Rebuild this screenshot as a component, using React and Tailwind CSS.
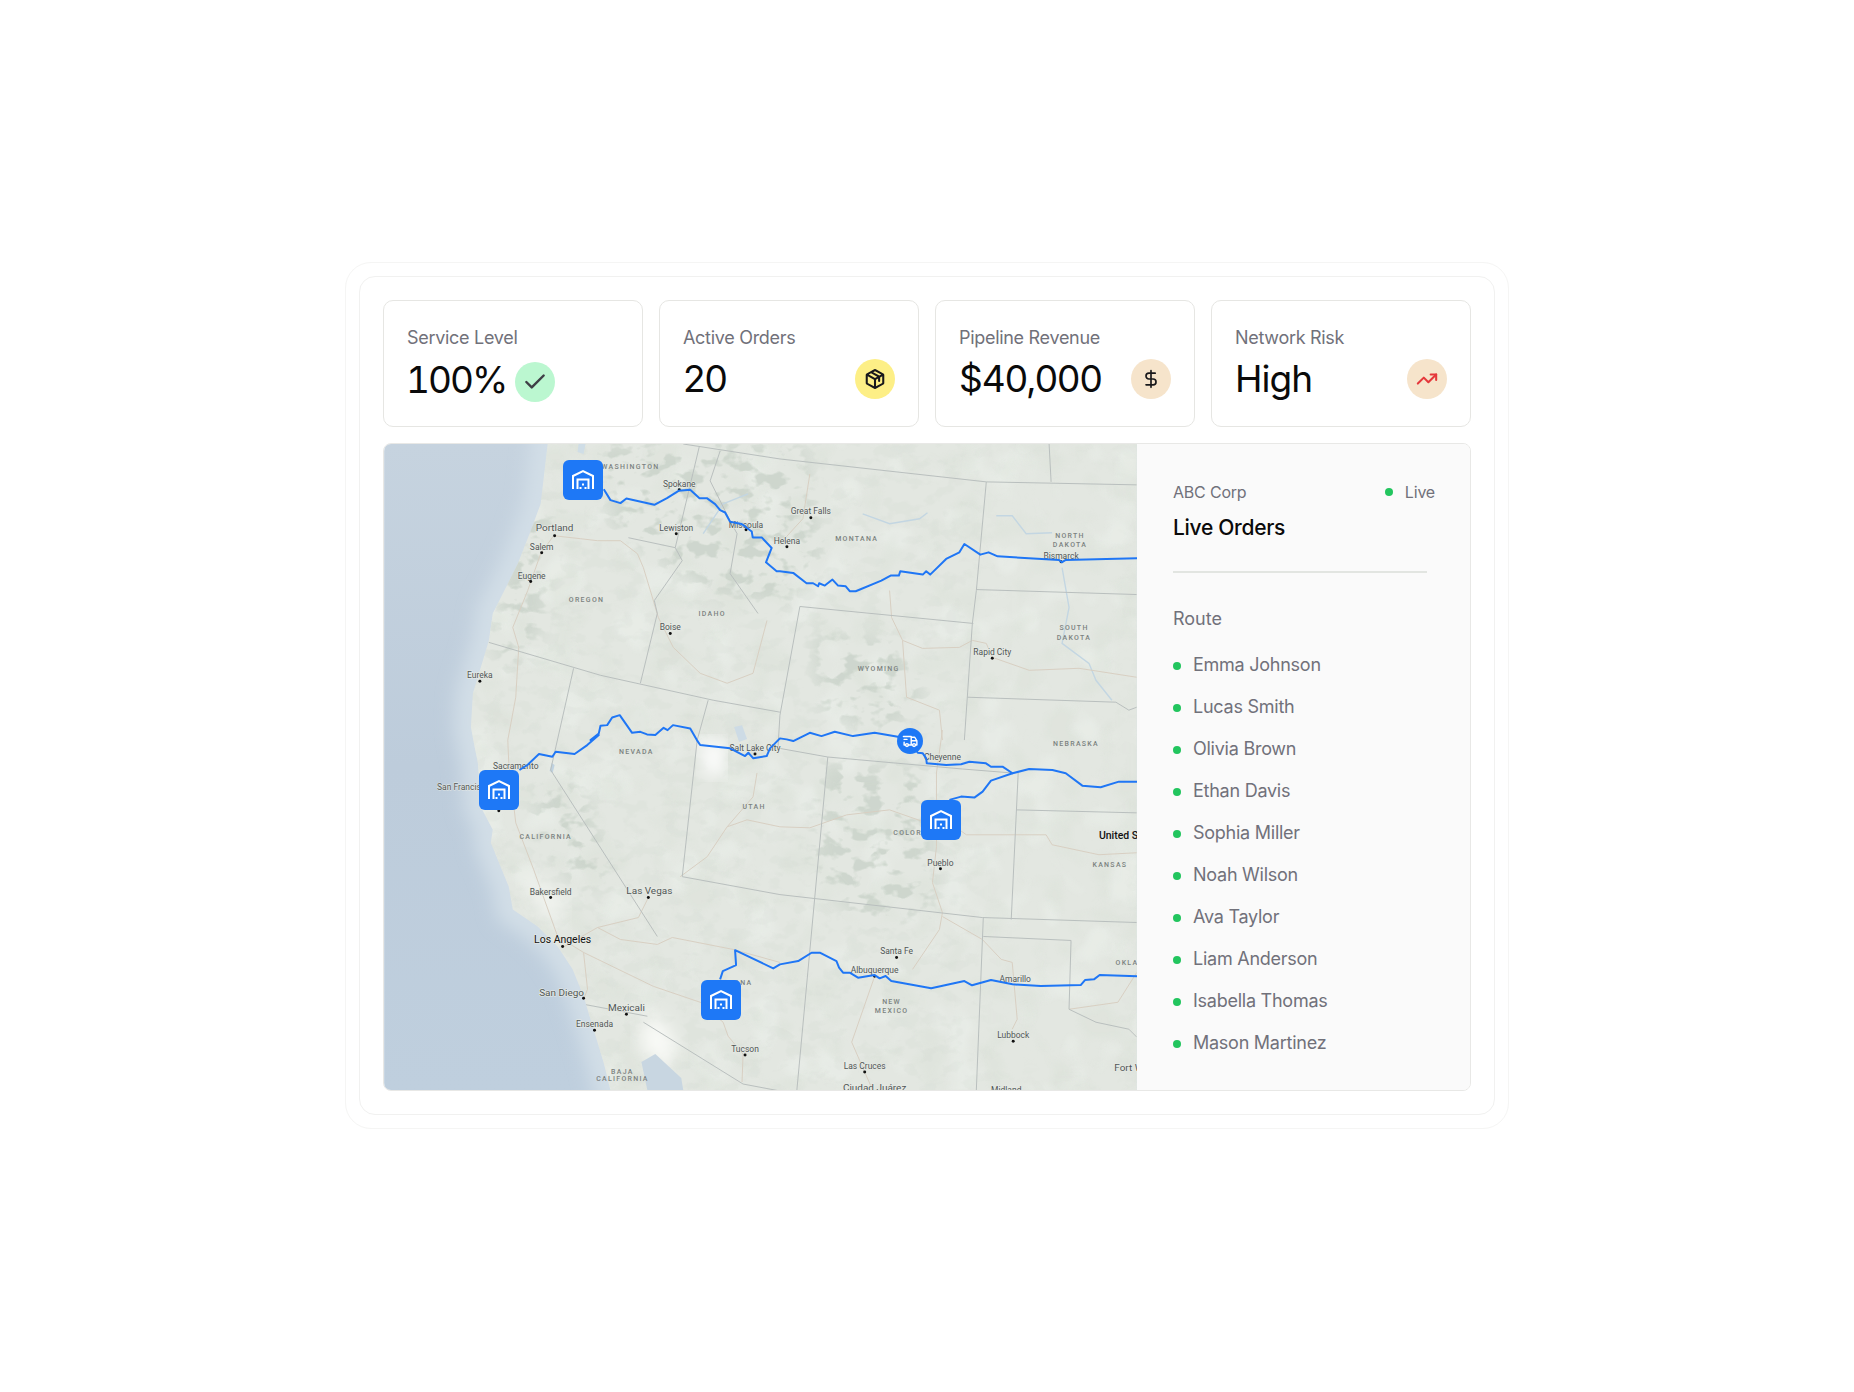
import { Check, DollarSign, TrendingUp } from "lucide-react";
import { PiPackageBold } from "react-icons/pi";
import { TbTruckDelivery } from "react-icons/tb";

const drivers = [
  "Emma Johnson",
  "Lucas Smith",
  "Olivia Brown",
  "Ethan Davis",
  "Sophia Miller",
  "Noah Wilson",
  "Ava Taylor",
  "Liam Anderson",
  "Isabella Thomas",
  "Mason Martinez",
];

// crops of the map were read at 3x, these turn crop coordinates into map coordinates
const crop = (ox, oy) => (pts) => pts.map(([x, y]) => [ox + x / 3, oy + y / 3]);
const nw = crop(-3, -3);
const ne = crop(397, -3);
const sw = crop(-3, 287);
const se = crop(397, 287);

const line = (pts) => "M" + pts.map(([x, y]) => `${x.toFixed(1)} ${y.toFixed(1)}`).join("L");

const land =
  line([
    [164, 0],
    [160, 34],
    [157, 60],
    [147, 87],
    [134, 120],
    [117, 154],
    [109, 170],
    [105, 197],
    [97, 224],
    [89, 250],
    [87, 284],
    [90, 300],
    [94, 320],
    [97, 364],
    [109, 387],
    [107, 400],
    [125, 444],
    [129, 467],
    [154, 484],
    [174, 504],
    [189, 527],
    [200, 554],
    [210, 587],
    [220, 620],
    [227, 648],
    [755, 648],
    [755, 0],
  ]) + "Z";

const routes = [
  [
    ...nw([[670, 145], [690, 178], [720, 187], [738, 173], [822, 192], [860, 172], [895, 150], [930, 147], [958, 172], [980, 172], [1005, 190], [1020, 208], [1035, 215], [1050, 243], [1085, 250], [1115, 272], [1118, 290], [1145, 290], [1175, 322], [1158, 365], [1190, 392]]),
    ...ne([[0, 392], [40, 397], [80, 428], [100, 428], [115, 437], [118, 428], [135, 435], [158, 417], [175, 435], [198, 437], [210, 452], [228, 452], [305, 420], [333, 405], [358, 405], [362, 392], [430, 402], [440, 392], [452, 402], [500, 355], [540, 335], [555, 310], [603, 342], [628, 335], [655, 347], [840, 358], [848, 365], [860, 358], [1078, 353]]),
  ],
  [
    ...sw([[416, 120], [440, 105], [475, 72], [515, 80], [525, 65], [582, 72], [620, 45], [655, 15]]),
    ...nw([[630, 900], [655, 880], [660, 857], [680, 855], [695, 832], [718, 825], [755, 878], [780, 875], [800, 883], [825, 885], [850, 863], [862, 870], [878, 855], [930, 865], [950, 900]]),
    ...sw([[960, 45], [1050, 55], [1095, 78], [1105, 68], [1120, 85], [1160, 78], [1170, 55], [1200, 25]]),
    ...se([[20, 28], [40, 33], [90, 8], [125, 18], [165, 5], [220, 18], [285, 8], [355, 20], [390, 33], [415, 68], [430, 70], [440, 85], [442, 100], [500, 105], [545, 103], [570, 95], [620, 100], [635, 110], [670, 110], [700, 130], [750, 117], [820, 120], [860, 130], [910, 167], [965, 172], [1020, 155], [1078, 155]]),
  ],
  se([[510, 210], [545, 200], [585, 203], [610, 185], [635, 152], [700, 130]]),
  [
    ...sw([[1020, 750], [1028, 725], [1068, 707], [1065, 662], [1180, 717], [1200, 705]]),
    ...se([[55, 695], [95, 670], [120, 670], [170, 695], [178, 715], [190, 730], [210, 730], [235, 745], [285, 737], [300, 747], [318, 740], [335, 755], [455, 777], [555, 755], [578, 768], [635, 752], [700, 765], [785, 770], [905, 767], [918, 752], [945, 750], [962, 737], [1078, 741]]),
  ],
];

const borders = [
  [[300, 0], [397, 15], [604, 38], [755, 41]],
  [[604, 38], [594, 147], [590, 180], [582, 297]],
  [[594, 146], [755, 151]],
  [[417, 163], [591, 180]],
  [[417, 163], [397, 272], [395, 305], [445, 314], [580, 326], [630, 330]],
  [[445, 314], [414, 648]],
  [[316, 3], [292, 104]],
  [[245, 94], [292, 104], [299, 117], [271, 157], [274, 170], [257, 240]],
  [[105, 199], [217, 232], [330, 257], [397, 269]],
  [[190, 225], [167, 327], [274, 494]],
  [[325, 257], [314, 297], [299, 434]],
  [[299, 434], [397, 452], [600, 475], [755, 480]],
  [[636, 330], [629, 477]],
  [[634, 367], [755, 370]],
  [[601, 475], [594, 648]],
  [[601, 494], [689, 498], [687, 567], [714, 580], [747, 587], [755, 595]],
  [[585, 254], [734, 259], [747, 267], [755, 264]],
  [[260, 580], [360, 642], [397, 649]],
  [[200, 562], [264, 574]],
  [[667, 0], [669, 38]],
  [[337, 7], [327, 37], [347, 77], [354, 90], [347, 130], [375, 170]],
];

const roads = [
  [[170, 92], [197, 95], [214, 97], [237, 97], [254, 110], [260, 124], [270, 157], [275, 174], [290, 204], [317, 230], [344, 240], [370, 230], [384, 177]],
  [[170, 92], [157, 110], [144, 147], [129, 184], [135, 204], [132, 254], [124, 297], [125, 320], [132, 380], [150, 427], [174, 494], [200, 510], [204, 547], [200, 557]],
  [[179, 505], [214, 485], [255, 475], [265, 455]],
  [[200, 510], [270, 544], [317, 560], [340, 580], [345, 594], [360, 612], [359, 640]],
  [[214, 485], [237, 497], [274, 502], [289, 495], [350, 507], [397, 520]],
  [[374, 330], [370, 354], [344, 384], [324, 414], [297, 434]],
  [[344, 384], [364, 377], [397, 384], [427, 385], [464, 372], [507, 367], [544, 380]],
  [[560, 287], [554, 330], [554, 404], [550, 440], [560, 470], [557, 487], [530, 527]],
  [[560, 474], [600, 497], [619, 517], [630, 520], [635, 577], [630, 587]],
  [[492, 534], [469, 600], [482, 630], [490, 648]],
  [[577, 387], [584, 392], [664, 392], [670, 402], [717, 412], [755, 410]],
  [[507, 147], [509, 174], [520, 197], [524, 254], [557, 267], [560, 297]],
  [[520, 197], [540, 205], [577, 204], [590, 197], [604, 200], [610, 214], [647, 227], [697, 225], [755, 234]],
  [[397, 100], [420, 75], [427, 30]],
  [[687, 567], [736, 560], [755, 530]],
];

const rivers = [
  [[614, 72], [630, 72], [644, 90], [670, 89]],
  [[680, 124], [687, 164], [680, 200], [707, 220], [714, 237], [730, 257]],
  [[480, 70], [507, 80], [537, 75], [545, 69]],
  [[320, 90], [340, 60], [365, 50]],
];

const cities = [
  ["Spokane", 296, 43, 296, 46],
  ["Lewiston", 293, 87, 293, 90],
  ["Portland", 171, 87, 171, 92, 10],
  ["Salem", 158, 106, 158, 109],
  ["Eugene", 148, 135, 147, 138],
  ["Boise", 287, 187, 287, 190],
  ["Eureka", 96, 235, 96, 238],
  ["Missoula", 363, 84, 363, 86],
  ["Great Falls", 428, 70, 428, 74],
  ["Helena", 404, 100, 404, 103],
  ["Bismarck", 679, 115, 679, 118],
  ["Rapid City", 610, 212, 610, 215],
  ["Sacramento", 132, 326, null, null],
  ["Bakersfield", 167, 452, 167, 455],
  ["Las Vegas", 266, 451, 265, 455, 10],
  ["Los Angeles", 179, 501, 179, 504, 10.5, "#111"],
  ["San Diego", 178, 554, 200, 556, 10],
  ["Mexicali", 243, 569, 243, 572, 10],
  ["Ensenada", 211, 585, 211, 588],
  ["Tucson", 362, 610, 362, 613],
  ["Salt Lake City", 372, 308, 372, 311],
  ["Cheyenne", 560, 317, null, null],
  ["Pueblo", 558, 423, 558, 426],
  ["Santa Fe", 514, 512, 514, 515],
  ["Albuquerque", 492, 531, 492, 534],
  ["Amarillo", 633, 540, null, null],
  ["Lubbock", 631, 596, 631, 599],
  ["Las Cruces", 482, 627, 482, 630],
  ["Ciudad Juárez", 492, 649, null, null, 10],
  ["Fort Worth", 756, 629, null, null, 10],
  ["Midland", 624, 651, null, null],
];

const states = [
  ["WASHINGTON", 247, 25],
  ["OREGON", 203, 158],
  ["IDAHO", 329, 173],
  ["MONTANA", 474, 97],
  ["NORTH", 688, 94],
  ["DAKOTA", 688, 103],
  ["SOUTH", 692, 187],
  ["DAKOTA", 692, 197],
  ["WYOMING", 496, 228],
  ["NEVADA", 253, 311],
  ["UTAH", 371, 366],
  ["CALIFORNIA", 162, 396],
  ["ARIZONA", 350, 543],
  ["BAJA", 239, 632],
  ["CALIFORNIA", 239, 639],
  ["NEBRASKA", 694, 303],
  ["COLORADO", 534, 392],
  ["KANSAS", 728, 424],
  ["NEW", 509, 562],
  ["MEXICO", 509, 571],
  ["OKLAHOMA", 758, 523],
];

function WarehouseIcon() {
  return (
    <svg viewBox="0 0 22 20" className="w-[22px] h-5" fill="none" stroke="white" strokeWidth="2">
      <path d="M1 19V6L11 1.2 21 6V19" />
      <path d="M5.5 19V9.5H16.5V19" />
      <rect x="10" y="13.5" width="2" height="2" fill="white" stroke="none" />
      <rect x="7.5" y="17" width="2" height="2" fill="white" stroke="none" />
      <rect x="12.5" y="17" width="2" height="2" fill="white" stroke="none" />
    </svg>
  );
}

function MapDrawing() {
  return (
    <svg viewBox="0 0 755 648" className="block w-full h-full" style={{ fontFamily: "Roboto, sans-serif" }}>
      <defs>
        <linearGradient id="sea" x1="0" y1="0" x2="0" y2="1">
          <stop offset="0" stopColor="#c6d3df" />
          <stop offset="0.5" stopColor="#bdccdb" />
          <stop offset="1" stopColor="#bfcfde" />
        </linearGradient>
        <clipPath id="landClip">
          <path d={land} />
        </clipPath>
        <filter id="soft" x="-20%" y="-20%" width="140%" height="140%">
          <feGaussianBlur stdDeviation="9" />
        </filter>
        <filter id="softer" x="-20%" y="-20%" width="140%" height="140%">
          <feGaussianBlur stdDeviation="22" />
        </filter>
        <filter id="ridges" x="0" y="0" width="100%" height="100%" colorInterpolationFilters="sRGB">
          <feTurbulence type="fractalNoise" baseFrequency="0.05 0.07" numOctaves="3" seed="11" />
          <feColorMatrix values="0 0 0 0 0.78  0 0 0 0 0.82  0 0 0 0 0.78  8 0 0 0 -4.2" />
          <feGaussianBlur stdDeviation="0.7" />
        </filter>
        <filter id="plains" x="0" y="0" width="100%" height="100%" colorInterpolationFilters="sRGB">
          <feTurbulence type="fractalNoise" baseFrequency="0.025" numOctaves="2" seed="4" />
          <feColorMatrix values="0 0 0 0 0.93  0 0 0 0 0.95  0 0 0 0 0.93  5 0 0 0 -2.6" />
          <feGaussianBlur stdDeviation="1" />
        </filter>
        <filter id="plainsDark" x="0" y="0" width="100%" height="100%" colorInterpolationFilters="sRGB">
          <feTurbulence type="fractalNoise" baseFrequency="0.03" numOctaves="2" seed="23" />
          <feColorMatrix values="0 0 0 0 0.85  0 0 0 0 0.88  0 0 0 0 0.84  5 0 0 0 -2.6" />
          <feGaussianBlur stdDeviation="1" />
        </filter>
        <mask id="mountains">
          <rect width="755" height="648" fill="#2c2c2c" />
          <g fill="#fff" filter="url(#soft)">
            <path d="M210 0L420 0 440 110 400 160 330 150 270 110 230 80Z" />
            <path d="M430 190L520 200 540 260 500 290 440 270Z" />
            <path d="M440 320L550 330 550 470 480 480 430 430Z" />
            <path d="M160 330L200 350 230 440 190 440 150 380Z" />
            <path d="M130 60L170 60 160 180 125 230 110 200Z" />
          </g>
          <path d="M600 0H755V648H600Z" fill="#000" filter="url(#softer)" />
        </mask>
      </defs>

      <rect width="755" height="648" fill="url(#sea)" />
      <path d={land} fill="none" stroke="#d2dee7" strokeWidth="34" filter="url(#soft)" />
      <path d={land} fill="#e3e7e1" />

      <g clipPath="url(#landClip)">
        <rect width="755" height="648" filter="url(#plains)" opacity="0.45" />
        <rect width="755" height="648" filter="url(#plainsDark)" opacity="0.35" />
        <g mask="url(#mountains)">
          <rect width="755" height="648" filter="url(#ridges)" opacity="0.75" />
        </g>

        {/* pale desert and coast */}
        <path d="M255 590L275 570 296 610 280 625 265 615Z" fill="#fafbf8" filter="url(#soft)" />
        <path d="M140 430L175 450 180 480 155 470Z" fill="#f2f4f0" filter="url(#soft)" />
        <path d="M318 298H340V332H322Z" fill="#fff" filter="url(#soft)" />
        <path d="M258 620L272 612 298 636 300 648 264 648Z" fill="#c8d6e1" />
        <path d="M351 284L359 282 364 296 356 299Z" fill="#cddbe5" />
        <path d="M168 320L171 322 169 330 166 328Z" fill="#bfd2e0" />
        <path d="M195 0H202L200 10 194 8Z" fill="#cfdde6" />

        {rivers.map((r, i) => (
          <path key={i} d={line(r)} fill="none" stroke="#c3d6e2" strokeWidth="1.4" />
        ))}
        {roads.map((r, i) => (
          <path key={i} d={line(r)} fill="none" stroke="#d8cfc2" strokeWidth="1" />
        ))}
        {borders.map((r, i) => (
          <path key={i} d={line(r)} fill="none" stroke="#b9bfbe" strokeWidth="1" />
        ))}
      </g>

      <g fontSize="7" fontWeight="500" fill="#7b8280" textAnchor="middle" letterSpacing="1.3">
        {states.map(([name, x, y], i) => (
          <text key={i} x={x} y={y}>
            {name}
          </text>
        ))}
      </g>
      <g textAnchor="middle">
        {cities.map(([name, x, y, dx, dy, size = 8.5, color = "#505655"]) => (
          <g key={name}>
            <text x={x} y={y} fontSize={size} fill={color} stroke="#e8ebe6" strokeWidth="1.2" paintOrder="stroke">
              {name}
            </text>
            {dx !== null && <circle cx={dx} cy={dy} r="1.5" fill="#111" />}
          </g>
        ))}
      </g>
      <text x="53" y="347" fontSize="8.5" fill="#505655" stroke="#e8ebe6" strokeWidth="0.8" paintOrder="stroke">
        San Francisco
      </text>
      <circle cx="115" cy="368" r="1.5" fill="#111" />
      <text x="717" y="396" fontSize="10.5" fontWeight="500" fill="#111">
        United States
      </text>

      {routes.map((r, i) => (
        <path key={i} d={line(r)} fill="none" stroke="#1f76f5" strokeWidth="2" strokeLinejoin="round" />
      ))}
    </svg>
  );
}

function Marker({ className }) {
  return (
    <div className={`absolute w-10 h-10 rounded-md bg-[#1e78f6] flex items-center justify-center ${className}`}>
      <WarehouseIcon />
    </div>
  );
}

function StatCard({ label, value, icon, circle, inline }) {
  return (
    <div className="border border-[#e6e6e3] rounded-[10px] bg-white pl-[23px] pr-[23px] pt-[25px] h-[127px]">
      <div className="text-[18px] leading-6 tracking-[-0.3px] text-[#71717a]">{label}</div>
      <div className={`flex items-center mt-[9px] h-[40px] ${inline ? "gap-[9px]" : "justify-between"}`}>
        <span className={`text-[37px] leading-[40px] text-[#0a0a0a] ${inline ? "relative top-[1px] -ml-[1px] tracking-[-2px] tabular-nums" : "tracking-[-1px]"}`}>{value}</span>
        <span className={`w-10 h-10 rounded-full flex items-center justify-center ${circle} ${inline ? "relative top-[3px]" : ""}`}>{icon}</span>
      </div>
    </div>
  );
}

export default function App() {
  return (
    <div className="min-h-[1392px] bg-white flex justify-center pt-[262px]" style={{ fontFamily: "Inter, sans-serif" }}>
      <div className="w-[1164px] h-[867px] border border-[#f5f5f4] rounded-[26px] p-[13px]">
        <div className="h-full border border-[#f1f1f0] rounded-[16px] p-[23px] flex flex-col gap-4">
          <div className="grid grid-cols-4 gap-4">
            <StatCard
              label="Service Level"
              value="100%"
              inline
              circle="bg-[#bbf7d0]"
              icon={<Check size={26} strokeWidth={2.25} className="text-[#3f3f46]" />}
            />
            <StatCard
              label="Active Orders"
              value="20"
              circle="bg-[#fdef86]"
              icon={<PiPackageBold size={22} className="text-[#18181b]" />}
            />
            <StatCard
              label="Pipeline Revenue"
              value="$40,000"
              circle="bg-[#f6e4cb]"
              icon={<DollarSign size={20} strokeWidth={2} className="text-[#18181b]" />}
            />
            <StatCard
              label="Network Risk"
              value="High"
              circle="bg-[#f6e4cb]"
              icon={<TrendingUp size={22} strokeWidth={2.25} className="text-[#e5383b]" />}
            />
          </div>

          <div className="flex-1 min-h-0 flex border border-[#e8e8e6] rounded-[8px] overflow-hidden">
            <div className="relative flex-1 min-w-0">
              <MapDrawing />
              <Marker className="left-[179px] top-[16px]" />
              <Marker className="left-[95px] top-[326px]" />
              <Marker className="left-[537px] top-[356px]" />
              <Marker className="left-[317px] top-[536px]" />
              <div className="absolute left-[513px] top-[284px] w-[26px] h-[26px] rounded-full bg-[#1e78f6] flex items-center justify-center">
                <TbTruckDelivery size={17} className="text-white" />
              </div>
            </div>

            <div className="w-[333px] shrink-0 bg-[#fafafa] pl-[36px] pr-[35px] pt-[36px]">
              <div className="flex items-center justify-between text-[16px] leading-6 tracking-[-0.2px] text-[#71717a]">
                <span>ABC Corp</span>
                <span className="flex items-center gap-[12px]">
                  <span className="w-2 h-2 rounded-full bg-[#22c55e]" />
                  Live
                </span>
              </div>
              <div className="mt-[10px] text-[21px] leading-7 font-medium tracking-[-0.3px] text-[#0a0a0a]">Live Orders</div>
              <div className="mt-[29px] w-[254px] h-[2px] bg-[#e2e5e1]" />
              <div className="mt-[32px] text-[18px] leading-7 text-[#71717a]">Route</div>
              <ul className="mt-[18px] flex flex-col gap-[14px]">
                {drivers.map((name) => (
                  <li key={name} className="flex items-center gap-3 text-[18px] leading-7 tracking-[-0.25px] text-[#71717a]">
                    <span className="w-2 h-2 rounded-full bg-[#22c55e] relative top-[1px]" />
                    {name}
                  </li>
                ))}
              </ul>
            </div>
          </div>
        </div>
      </div>
    </div>
  );
}
